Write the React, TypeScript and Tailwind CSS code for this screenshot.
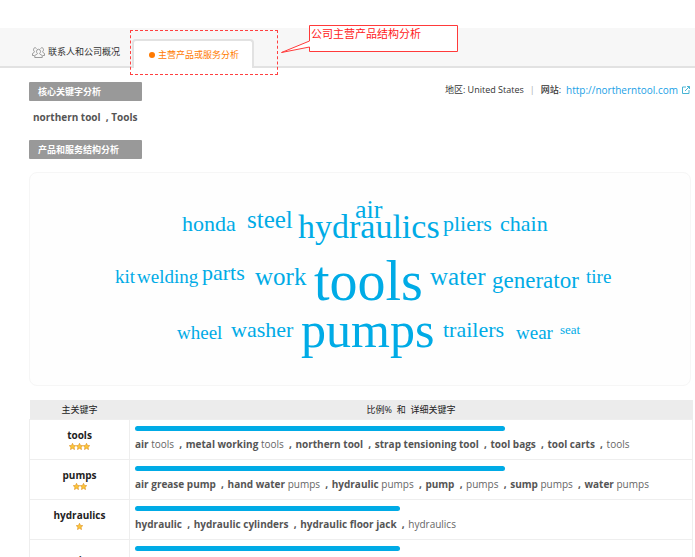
import React from 'react';

interface Word {
  text: string;
  x: number;
  y: number;
  size: number;
}

interface Keyword {
  name: string;
  stars: number;
  percent: number;
  // text wrapped in * is bold
  details: string[];
}

const words: Word[] = [
  { text: 'air', x: 325, y: 45, size: 26 },
  { text: 'honda', x: 152, y: 58, size: 22 },
  { text: 'steel', x: 217, y: 55, size: 25 },
  { text: 'hydraulics', x: 268, y: 65, size: 34 },
  { text: 'pliers', x: 413, y: 58, size: 22 },
  { text: 'chain', x: 470, y: 58, size: 22 },
  { text: 'kit', x: 85, y: 110, size: 19 },
  { text: 'welding', x: 107, y: 110, size: 19 },
  { text: 'parts', x: 172, y: 107, size: 22 },
  { text: 'work', x: 225, y: 112, size: 25 },
  { text: 'tools', x: 284, y: 127, size: 56 },
  { text: 'water', x: 400, y: 112, size: 25 },
  { text: 'generator', x: 462, y: 115, size: 23 },
  { text: 'tire', x: 556, y: 110, size: 19 },
  { text: 'wheel', x: 147, y: 166, size: 19 },
  { text: 'washer', x: 201, y: 164, size: 22 },
  { text: 'pumps', x: 271, y: 174, size: 50 },
  { text: 'trailers', x: 413, y: 164, size: 22 },
  { text: 'wear', x: 486, y: 166, size: 19 },
  { text: 'seat', x: 530, y: 161, size: 13 },
];

const keywords: Keyword[] = [
  {
    name: 'tools',
    stars: 3,
    percent: 67,
    details: ['*air* tools', '*metal working* tools', '*northern tool*', '*strap tensioning tool*', '*tool bags*', '*tool carts*', 'tools'],
  },
  {
    name: 'pumps',
    stars: 2,
    percent: 67,
    details: ['*air grease pump*', '*hand water* pumps', '*hydraulic* pumps', '*pump*', 'pumps', '*sump* pumps', '*water* pumps'],
  },
  {
    name: 'hydraulics',
    stars: 1,
    percent: 48,
    details: ['*hydraulic*', '*hydraulic cylinders*', '*hydraulic floor jack*', 'hydraulics'],
  },
  {
    name: 'air',
    stars: 0,
    percent: 48,
    details: [],
  },
];

const Star: React.FC = () => (
  <svg className="w-[7px] h-[7px]" viewBox="0 0 14 14">
    <path
      d="M7 .6l1.9 4.2 4.6.5-3.4 3.1.9 4.6L7 10.7 3 13l.9-4.6L.5 5.3l4.6-.5z"
      fill="#fcc636"
      stroke="#e29a2c"
      strokeWidth="1.4"
    />
  </svg>
);

const PeopleIcon: React.FC = () => (
  <svg className="w-[13px] h-[11px]" viewBox="0 0 26 22" fill="none" stroke="#8a8a8a" strokeWidth="1.7">
    <path d="M9 9a4 4.500 0 1 1 8 0c0 2-1 3.500-2 4.200 0 2 5 1.800 5.500 4.300V21h-15v-3.500C6 15 11 15.200 11 13.200 10 12.500 9 11 9 9z" />
    <path d="M9 3C7.500.5 3 1 3 5.200c0 2 .8 3.300 2 4.300C5 11.500 1 11 1 14v3h3.500" />
    <path d="M17 3c1.500-2.500 6-2 6 2.200 0 2-.8 3.300-2 4.300 0 2 4 1.500 4 4.500v3h-3.500" />
  </svg>
);

const SectionTitle: React.FC<{ children: React.ReactNode }> = ({ children }) => (
  <h2 className="w-[113px] h-[19px] pl-[9px] rounded-[1px] bg-[#999999] text-white text-[9px] leading-[19px] font-bold">
    {children}
  </h2>
);

const Callout: React.FC = () => (
  <div className="absolute left-[149px] -top-[14px] w-[178px] h-7">
    <svg className="absolute inset-0" width="178" height="28" viewBox="0 0 178 28" fill="none">
      <path d="M28.5 .5H176.500V26.500H28.500V22L.5 27.500L28.500 16Z" fill="#fff" stroke="#ff3a3a" />
    </svg>
    <span className="relative block pl-[30px] text-[11px] leading-[17px] text-[#ff1a1a] whitespace-nowrap">
      公司主营产品结构分析
    </span>
  </div>
);

const DetailText: React.FC<{ text: string }> = ({ text }) => (
  <>
    {text.split('*').map((part, i) =>
      i % 2 ? (
        <b key={i} className="font-bold text-[#555555]">{part}</b>
      ) : (
        <span key={i}>{part}</span>
      )
    )}
  </>
);

const WordCloud: React.FC = () => (
  <div className="mt-[13px] mr-0.5 rounded-lg border border-[#f6f6f6] bg-[#fefefe]">
    <svg className="block w-full h-[212px]" viewBox="0 0 660 212" fill="#00abe6">
      {words.map(word => (
        <text key={word.text} x={word.x} y={word.y} fontSize={word.size} className="font-['Liberation_Serif',serif]">
          {word.text}
        </text>
      ))}
    </svg>
  </div>
);

const KeywordTable: React.FC = () => (
  <table className="w-full mt-[14px] table-fixed border-collapse text-[10px]">
    <thead>
      <tr className="h-[19px] bg-[#ececec] text-[9px] leading-[19px] text-[#222222]">
        <th className="w-[100px] p-0 font-normal">主关键字</th>
        <th className="p-0 font-normal whitespace-pre">比例%  和  详细关键字</th>
      </tr>
    </thead>
    <tbody>
      {keywords.map(keyword => (
        <tr key={keyword.name} className="h-10 border border-[#eeeeee]">
          <td className="p-0 border-r border-[#eeeeee] text-center">
            <div className="leading-4 font-bold text-[#222222]">{keyword.name}</div>
            {keyword.stars > 0 && (
              <div className="flex justify-center h-2.5">
                {Array.from({ length: keyword.stars }, (_, i) => (
                  <Star key={i} />
                ))}
              </div>
            )}
          </td>
          <td className="px-[5px] py-0">
            <div className="h-[5px] rounded-full bg-[#00abe6]" style={{ width: `${keyword.percent}%` }} />
            <div className="h-[17px] mt-[5px] leading-4 text-[#666666] whitespace-nowrap">
              {keyword.details.map((detail, i) => (
                <React.Fragment key={detail}>
                  {i > 0 && <b className="mr-px font-bold whitespace-pre text-[#555555]">{'  , '}</b>}
                  <DetailText text={detail} />
                </React.Fragment>
              ))}
            </div>
          </td>
        </tr>
      ))}
    </tbody>
  </table>
);

const App: React.FC = () => {
  return (
    <div className="h-screen overflow-hidden bg-white pt-7 font-['Open_Sans','Noto_Sans_CJK_SC',sans-serif]">
      <nav className="flex items-end h-10 pl-8 bg-[#f7f7f7] border-b-2 border-[#e2e2e2]">
        <button className="flex items-center gap-[3px] h-7 w-[100px] text-[9px] text-[#333333] whitespace-nowrap">
          <PeopleIcon />
          联系人和公司概况
        </button>
        <div className="relative -mb-0.5">
          <button className="flex items-center gap-[3px] h-[29px] w-[122px] pl-[15px] rounded-t-sm border-2 border-b-0 border-[#e2e2e2] bg-white text-[9px] text-[#ff7a00] whitespace-nowrap">
            <span className="w-1.5 h-1.5 rounded-full bg-[#ff7a00]" />
            主营产品或服务分析
          </button>
          <div className="absolute -left-0.5 -top-[9px] w-[148px] h-[45px] border border-dashed border-[#ff4040]" />
          <Callout />
        </div>
      </nav>

      <main className="pt-[14px] pl-[29px] pr-0.5">
        <div className="flex items-start justify-between">
          <SectionTitle>核心关键字分析</SectionTitle>
          <div className="flex items-center h-4 pr-[3px] text-[9px] text-[#333333]">
            <span>地区: United States</span>
            <span className="mx-1.5 text-[#aaaaaa]">|</span>
            <span className="font-medium">网站:</span>
            <a href="http://northerntool.com" className="flex items-center gap-1 ml-[5px] text-[10px] text-[#1a9fe6]">
              http://northerntool.com
              <svg className="w-2 h-2" viewBox="0 0 16 16" fill="none" stroke="#48b4d4" strokeWidth="2">
                <path d="M8 2H1v13h13V8M10 1h5v5M15 1L6 10" />
              </svg>
            </a>
          </div>
        </div>
        <p className="pl-1 my-2 text-[10px] leading-4 font-bold text-[#555555] whitespace-pre">northern tool  , Tools</p>
        <div className="pt-[7px]">
          <SectionTitle>产品和服务结构分析</SectionTitle>
        </div>
        <WordCloud />
        <KeywordTable />
      </main>
    </div>
  );
};

export default App;
